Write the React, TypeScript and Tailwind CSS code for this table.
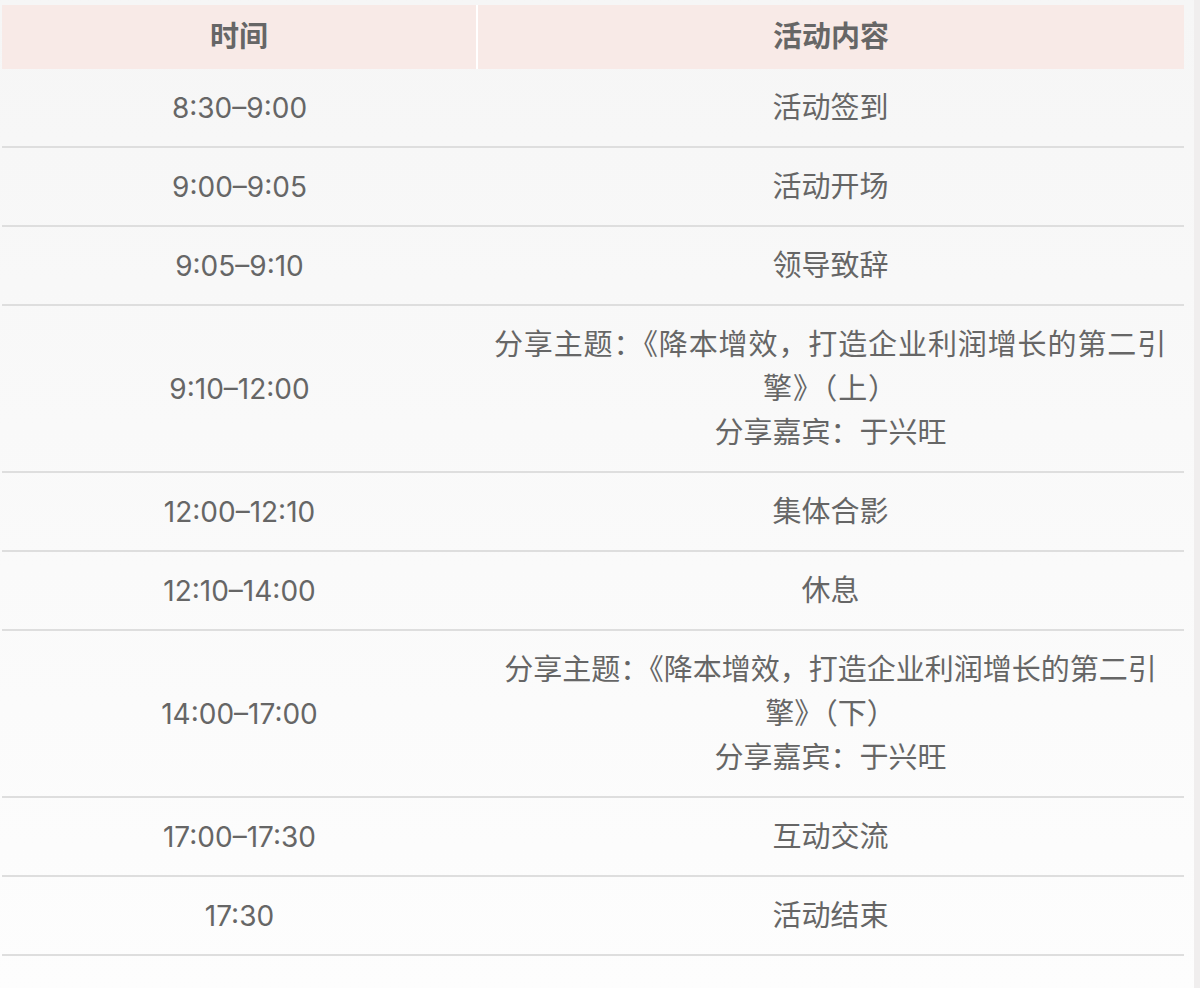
import React from "react";

type Row = { time: string; lines: string[]; wide?: boolean };

const rows: Row[] = [
  { time: "8:30–9:00", lines: ["活动签到"] },
  { time: "9:00–9:05", lines: ["活动开场"] },
  { time: "9:05–9:10", lines: ["领导致辞"] },
  {
    time: "9:10–12:00",
    lines: ["分享主题：《降本增效，打造企业利润增长的第二引擎》（上）", "分享嘉宾：于兴旺"],
    wide: true,
  },
  { time: "12:00–12:10", lines: ["集体合影"] },
  { time: "12:10–14:00", lines: ["休息"] },
  {
    time: "14:00–17:00",
    lines: ["分享主题：《降本增效，打造企业利润增长的第二引擎》（下）", "分享嘉宾：于兴旺"],
  },
  { time: "17:00–17:30", lines: ["互动交流"] },
  { time: "17:30", lines: ["活动结束"] },
];

export default function App() {
  return (
    <div
      className="flex h-[988px] w-[1200px] bg-gradient-to-b from-[#f6f6f6] to-[#fdfdfd] text-[#666666]"
      style={{ fontFamily: '"Liberation Sans", "Noto Sans CJK SC", sans-serif' }}
    >
      <div className="flex-1 pl-[2px] pt-[5px]">
        <table className="w-[1182px] table-fixed border-collapse">
          <colgroup>
            <col className="w-[475px]" />
            <col className="w-[707px]" />
          </colgroup>
          <thead>
            <tr className="bg-[#f8eae7]">
              <th className="border-r-2 border-white py-[10px] text-center text-[29px] font-bold leading-[44px] text-[#666666]">
                时间
              </th>
              <th className="py-[10px] text-center text-[29px] font-bold leading-[44px] text-[#666666]">
                活动内容
              </th>
            </tr>
          </thead>
          <tbody>
            {rows.map((r) => (
              <tr key={r.time} className="border-b-2 border-[#dedede]">
                <td
                  className="py-[16.5px] text-center align-middle text-[28px] leading-[44px]"
                  style={{ fontFamily: 'Inter, "Liberation Sans", sans-serif' }}
                >
                  {r.time}
                </td>
                <td className="px-[6px] py-[16.5px] text-center align-middle text-[29px] leading-[44px]">
                  {r.lines.map((l, i) => (
                    <div key={l} className={r.wide && i === 0 ? "tracking-[0.9px]" : ""}>
                      {l}
                    </div>
                  ))}
                </td>
              </tr>
            ))}
          </tbody>
        </table>
      </div>
      <div className="w-[6px] bg-[#f0eeee]" />
    </div>
  );
}
